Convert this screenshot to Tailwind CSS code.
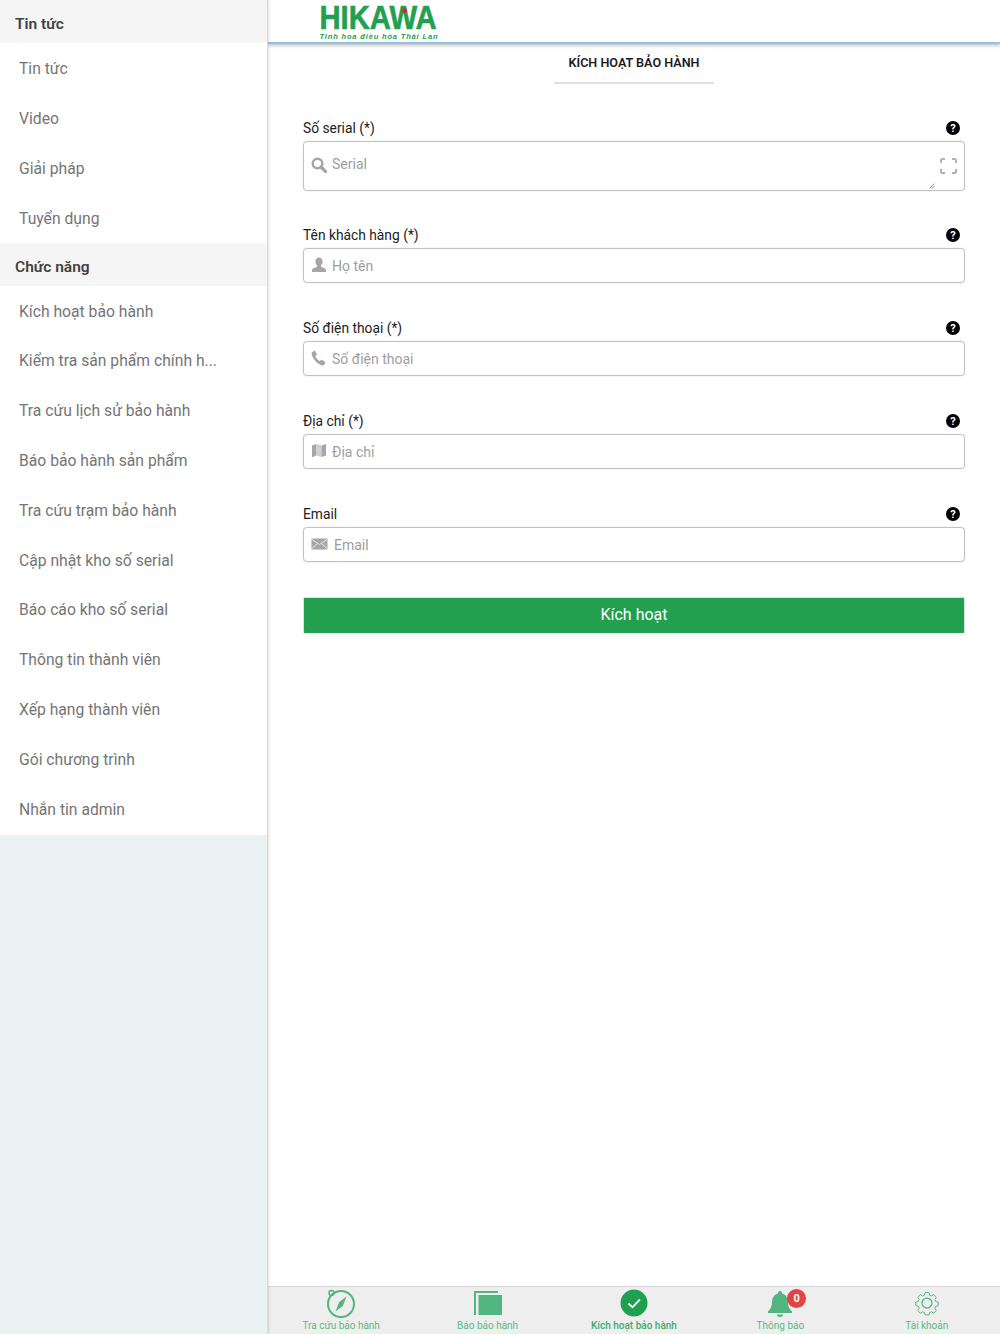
<!DOCTYPE html>
<html lang="vi">
<head>
    <meta charset="UTF-8">
    <meta name="viewport" content="width=device-width, initial-scale=1.0">
    <title>Kích hoạt bảo hành</title>
    <script src="https://cdn.jsdelivr.net/npm/@tailwindcss/browser@4"></script>
</head>
<body class="font-['Roboto',sans-serif] text-[#212121] antialiased">
    <div class="w-[1000px] h-[1334px] flex overflow-hidden bg-white">
        <!-- Sidebar -->
        <aside class="w-[268px] h-full shrink-0 bg-[#ecf1f4] border-r border-[#d8dcde] shadow-[1px_0_2px_rgba(0,0,0,0.12)] z-10">
            <div class="h-[43px] pl-[15px] pt-[7px] flex items-center bg-[#f5f5f5] text-[15.5px] font-semibold text-[#424242]">Tin tức</div>
            <ul class="bg-white text-[15.7px] text-[#757575]">
                <li class="h-[50px] pl-[19px] pt-[1px] flex items-center">Tin tức</li>
                <li class="h-[50px] pl-[19px] pt-[1px] flex items-center">Video</li>
                <li class="h-[50px] pl-[19px] pt-[1px] flex items-center">Giải pháp</li>
                <li class="h-[50px] pl-[19px] pt-[1px] flex items-center">Tuyển dụng</li>
            </ul>
            <div class="h-[43px] pl-[15px] pt-[7px] flex items-center bg-[#f5f5f5] text-[15.5px] font-semibold text-[#424242]">Chức năng</div>
            <ul class="bg-white text-[15.7px] text-[#757575] pb-[1px]">
                <li class="h-[49.8px] pl-[19px] pt-[1px] flex items-center">Kích hoạt bảo hành</li>
                <li class="h-[49.8px] pl-[19px] pt-[1px] flex items-center">Kiểm tra sản phẩm chính h...</li>
                <li class="h-[49.8px] pl-[19px] pt-[1px] flex items-center">Tra cứu lịch sử bảo hành</li>
                <li class="h-[49.8px] pl-[19px] pt-[1px] flex items-center">Báo bảo hành sản phẩm</li>
                <li class="h-[49.8px] pl-[19px] pt-[1px] flex items-center">Tra cứu trạm bảo hành</li>
                <li class="h-[49.8px] pl-[19px] pt-[1px] flex items-center">Cập nhật kho số serial</li>
                <li class="h-[49.8px] pl-[19px] pt-[1px] flex items-center">Báo cáo kho số serial</li>
                <li class="h-[49.8px] pl-[19px] pt-[1px] flex items-center">Thông tin thành viên</li>
                <li class="h-[49.8px] pl-[19px] pt-[1px] flex items-center">Xếp hạng thành viên</li>
                <li class="h-[49.8px] pl-[19px] pt-[1px] flex items-center">Gói chương trình</li>
                <li class="h-[49.8px] pl-[19px] pt-[1px] flex items-center">Nhắn tin admin</li>
            </ul>
        </aside>

        <!-- Main -->
        <div class="flex-1 h-full flex flex-col min-w-0">
            <!-- Header with logo -->
            <header class="h-[44px] shrink-0 pl-[51px] bg-white border-b-2 border-[#8fc3e3] shadow-[0_2px_3px_rgba(0,0,0,0.22)] relative">
                <svg class="block w-[120px] h-[41px] overflow-visible" viewBox="0 0 120 41">
                    <text x="0.500" y="29" textLength="117" lengthAdjust="spacingAndGlyphs" font-family="Liberation Sans" font-weight="700" font-size="33" fill="#22a04f" stroke="#22a04f" stroke-width="0.6">HIKAWA</text>
                    <circle cx="85.700" cy="10.700" r="2.400" fill="#d8232a"/>
                    <text x="0.500" y="38.500" textLength="118" lengthAdjust="spacing" font-family="Liberation Sans" font-weight="700" font-style="italic" font-size="7.500" fill="#22a04f">Tinh hoa điều hòa Thái Lan</text>
                </svg>
            </header>

            <main class="flex-1 min-h-0 flex flex-col">
                <!-- Tab -->
                <div class="flex justify-center">
                    <div class="w-[160px] h-[40px] flex items-center justify-center border-b-2 border-[#e0e0e0] text-[12.6px] font-semibold text-[#1c1c1c]">KÍCH HOẠT BẢO HÀNH</div>
                </div>

                <!-- Form -->
                <form class="pt-[34px] pl-[35px] pr-[35px] flex flex-col">
                    <div class="flex items-center justify-between h-[20px] text-[13.8px]">
                        <span>Số serial (*)</span>
                        <svg class="w-[14px] h-[14px] mr-[5px]" viewBox="0 0 14 14"><circle cx="7" cy="7" r="7" fill="#000"/><text x="7" y="10.8" text-anchor="middle" font-size="11" font-weight="700" font-family="Roboto" fill="#fff">?</text></svg>
                    </div>
                    <div class="mt-[3px] h-[50px] relative flex items-center pl-[7px] pb-[3px] border border-[#c2c2c2] rounded-[4px] shadow-[0_0_1px_rgba(0,0,0,0.3)] text-[14px] text-[#9e9e9e]">
                        <svg class="w-[16px] h-[16px] mr-[5px] mt-[1px]" viewBox="0 0 16 16" fill="none" stroke="#a6a6a6"><circle cx="6.500" cy="6.500" r="4.800" stroke-width="2.400"/><path d="M10 10l4.600 4.600" stroke-width="3.200" stroke-linecap="round"/></svg>
                        <span>Serial</span>
                        <svg class="absolute right-[7px] top-[16px] w-[17px] h-[16px]" viewBox="0 0 17 16" fill="none" stroke="#b0b0b0" stroke-width="2"><path d="M1 5V2.500Q1 1 2.500 1H5M12 1h2.500Q16 1 16 2.500V5M16 11v2.500Q16 15 14.500 15H12M5 15H2.500Q1 15 1 13.500V11"/></svg>
                        <svg class="absolute right-[29px] bottom-[1px] w-[6px] h-[6px]" viewBox="0 0 6 6" fill="none" stroke="#777" stroke-width="0.8"><path d="M.5 5.500L5.500.5M3 5.500L5.500 3"/></svg>
                    </div>

                    <div class="mt-[34px] flex items-center justify-between h-[20px] text-[13.8px]">
                        <span class="mt-[1px]">Tên khách hàng (*)</span>
                        <svg class="w-[14px] h-[14px] mr-[5px]" viewBox="0 0 14 14"><circle cx="7" cy="7" r="7" fill="#000"/><text x="7" y="10.8" text-anchor="middle" font-size="11" font-weight="700" font-family="Roboto" fill="#fff">?</text></svg>
                    </div>
                    <div class="mt-[3px] h-[35px] flex items-center pl-[7px] pt-[2px] border border-[#c2c2c2] rounded-[4px] shadow-[0_0_1px_rgba(0,0,0,0.3)] text-[14px] text-[#9e9e9e]">
                        <svg class="w-[16px] h-[16px] mr-[5px] -mt-[4px]" viewBox="0 0 16 16" fill="#a6a6a6"><path d="M8 .5c2.300 0 3.600 1.700 3.600 4 0 1.700-.8 3.200-1.700 4v1.300c1.800.8 5.100 1.700 5.100 3.300V15H1v-1.900c0-1.600 3.300-2.500 5.100-3.300V8.500c-.9-.8-1.700-2.300-1.700-4 0-2.300 1.300-4 3.600-4z"/></svg>
                        <span>Họ tên</span>
                    </div>

                    <div class="mt-[35px] flex items-center justify-between h-[20px] text-[13.8px]">
                        <span>Số điện thoại (*)</span>
                        <svg class="w-[14px] h-[14px] mr-[5px]" viewBox="0 0 14 14"><circle cx="7" cy="7" r="7" fill="#000"/><text x="7" y="10.8" text-anchor="middle" font-size="11" font-weight="700" font-family="Roboto" fill="#fff">?</text></svg>
                    </div>
                    <div class="mt-[3px] h-[35px] flex items-center pl-[7px] pt-[2px] border border-[#c2c2c2] rounded-[4px] shadow-[0_0_1px_rgba(0,0,0,0.3)] text-[14px] text-[#9e9e9e]">
                        <svg class="w-[16px] h-[16px] mr-[5px] -mt-[4px]" viewBox="0 0 16 16" fill="#a6a6a6"><path d="M1 2.200L3.800.5l2.300 3.900-1.900 1.300c.7 2.200 2.600 4.400 4.700 5.400l1.500-1.500 4.100 2.400-1.400 2.700c-.5.800-1.400 1-2.300.7C5.700 13.500 1.700 9 .6 3.800.4 3.200.6 2.600 1 2.200z"/></svg>
                        <span>Số điện thoại</span>
                    </div>

                    <div class="mt-[35px] flex items-center justify-between h-[20px] text-[13.8px]">
                        <span>Địa chỉ (*)</span>
                        <svg class="w-[14px] h-[14px] mr-[5px]" viewBox="0 0 14 14"><circle cx="7" cy="7" r="7" fill="#000"/><text x="7" y="10.8" text-anchor="middle" font-size="11" font-weight="700" font-family="Roboto" fill="#fff">?</text></svg>
                    </div>
                    <div class="mt-[3px] h-[35px] flex items-center pl-[7px] pt-[2px] border border-[#c2c2c2] rounded-[4px] shadow-[0_0_1px_rgba(0,0,0,0.3)] text-[14px] text-[#9e9e9e]">
                        <svg class="w-[16px] h-[16px] mr-[5px] -mt-[4px]" viewBox="0 0 16 16"><path d="M1 2.500L5.500 1v11.500L1 14.300z" fill="#a6a6a6"/><path d="M5.500 1l5 1.500V14l-5-1.500z" fill="#cfcfcf"/><path d="M10.500 2.500L15 1v11.500L10.500 14z" fill="#a6a6a6"/></svg>
                        <span>Địa chỉ</span>
                    </div>

                    <div class="mt-[35px] flex items-center justify-between h-[20px] text-[13.8px]">
                        <span>Email</span>
                        <svg class="w-[14px] h-[14px] mr-[5px]" viewBox="0 0 14 14"><circle cx="7" cy="7" r="7" fill="#000"/><text x="7" y="10.8" text-anchor="middle" font-size="11" font-weight="700" font-family="Roboto" fill="#fff">?</text></svg>
                    </div>
                    <div class="mt-[3px] h-[35px] flex items-center pl-[7px] pt-[2px] border border-[#c2c2c2] rounded-[4px] shadow-[0_0_1px_rgba(0,0,0,0.3)] text-[14px] text-[#9e9e9e]">
                        <svg class="w-[17px] h-[12px] mr-[6px] -mt-[4px]" viewBox="0 0 16 12"><rect width="16" height="11" y="0.500" fill="#a6a6a6"/><path d="M.5 1.500L8 6.500l7.500-5M.5 10.500L6 5.500M15.500 10.500L10 5.500" fill="none" stroke="#e8e8e8" stroke-width="1"/></svg>
                        <span>Email</span>
                    </div>

                    <button type="button" class="mt-[35px] h-[36px] w-full bg-[#22a04f] text-white text-[16px] rounded-[2px] border border-[#cfe8d8] border-b-[#22a04f]">Kích hoạt</button>
                </form>
            </main>

            <!-- Bottom tabs -->
            <nav class="h-[48px] shrink-0 grid grid-cols-5 bg-[#eeeeee] border-t border-[#d6d6d6] text-[10px] text-[#5bb884] text-center">
                <div class="flex flex-col items-center pt-[1px]">
                    <svg class="w-[30px] h-[30px]" viewBox="0 0 30 30" fill="none"><circle cx="15" cy="16" r="13" stroke="#53b57f" stroke-width="2"/><circle cx="5.500" cy="5" r="2.500" stroke="#53b57f" stroke-width="1.500"/><path d="M20.500 8.500L16.800 18 9.500 23.500 13.200 14z" fill="#53b57f"/></svg>
                    <span class="leading-[13px] mt-[1px]">Tra cứu bảo hành</span>
                </div>
                <div class="flex flex-col items-center pt-[1px]">
                    <svg class="w-[30px] h-[30px]" viewBox="0 0 30 30"><path d="M1 3h24v2H3v22H1z" fill="#53b57f"/><rect x="5.500" y="7" width="23.500" height="20" fill="#53b57f"/></svg>
                    <span class="leading-[13px] mt-[1px]">Báo bảo hành</span>
                </div>
                <div class="flex flex-col items-center pt-[1px] font-medium text-[#3fa96d]">
                    <svg class="w-[30px] h-[30px]" viewBox="0 0 30 30"><circle cx="15" cy="15" r="13.500" fill="#1f9f50"/><path d="M9.500 15.500l4 3.800 7.500-8" fill="none" stroke="#fff" stroke-width="1.800"/></svg>
                    <span class="leading-[13px] mt-[1px]">Kích hoạt bảo hành</span>
                </div>
                <div class="flex flex-col items-center pt-[1px] relative">
                    <svg class="w-[30px] h-[30px]" viewBox="0 0 30 30" fill="#53b57f"><path d="M15 3a2 2 0 0 1 2 2v.5c4 1 6 4.500 6 8.500 0 4.500 1.500 7 4 9.500v1.500H3v-1.500c2.500-2.500 4-5 4-9.500 0-4 2-7.500 6-8.500V5a2 2 0 0 1 2-2z"/><path d="M12 26.500h6a3 2.500 0 0 1-6 0z"/></svg>
                    <span class="leading-[13px] mt-[1px]">Thông báo</span>
                    <span class="absolute left-[80px] top-[2px] w-[19px] h-[19px] rounded-full bg-[#e04444] text-white text-[11px] font-bold leading-[19px]">0</span>
                </div>
                <div class="flex flex-col items-center pt-[1px]">
                    <svg class="w-[30px] h-[30px]" viewBox="0 0 24 24" fill="none" stroke="#53b57f" stroke-width="1"><circle cx="12" cy="12" r="4"/><path d="M10 1.800h4l.6 2.800 2 .9 2.500-1.500 2.700 2.900-1.500 2.400.8 2 2.700.7v3.700l-2.700.7-.8 2 1.500 2.400-2.700 2.900-2.500-1.500-2 .9-.6 2.300h-4l-.6-2.300-2-.9-2.500 1.500-2.700-2.900 1.500-2.400-.8-2-2.700-.7v-3.700l2.700-.7.8-2-1.500-2.400 2.700-2.900 2.500 1.500 2-.9z" transform="translate(2.900 2.200) scale(0.76)" stroke-linejoin="round"/></svg>
                    <span class="leading-[13px] mt-[1px]">Tài khoản</span>
                </div>
            </nav>
        </div>
    </div>
</body>
</html>
